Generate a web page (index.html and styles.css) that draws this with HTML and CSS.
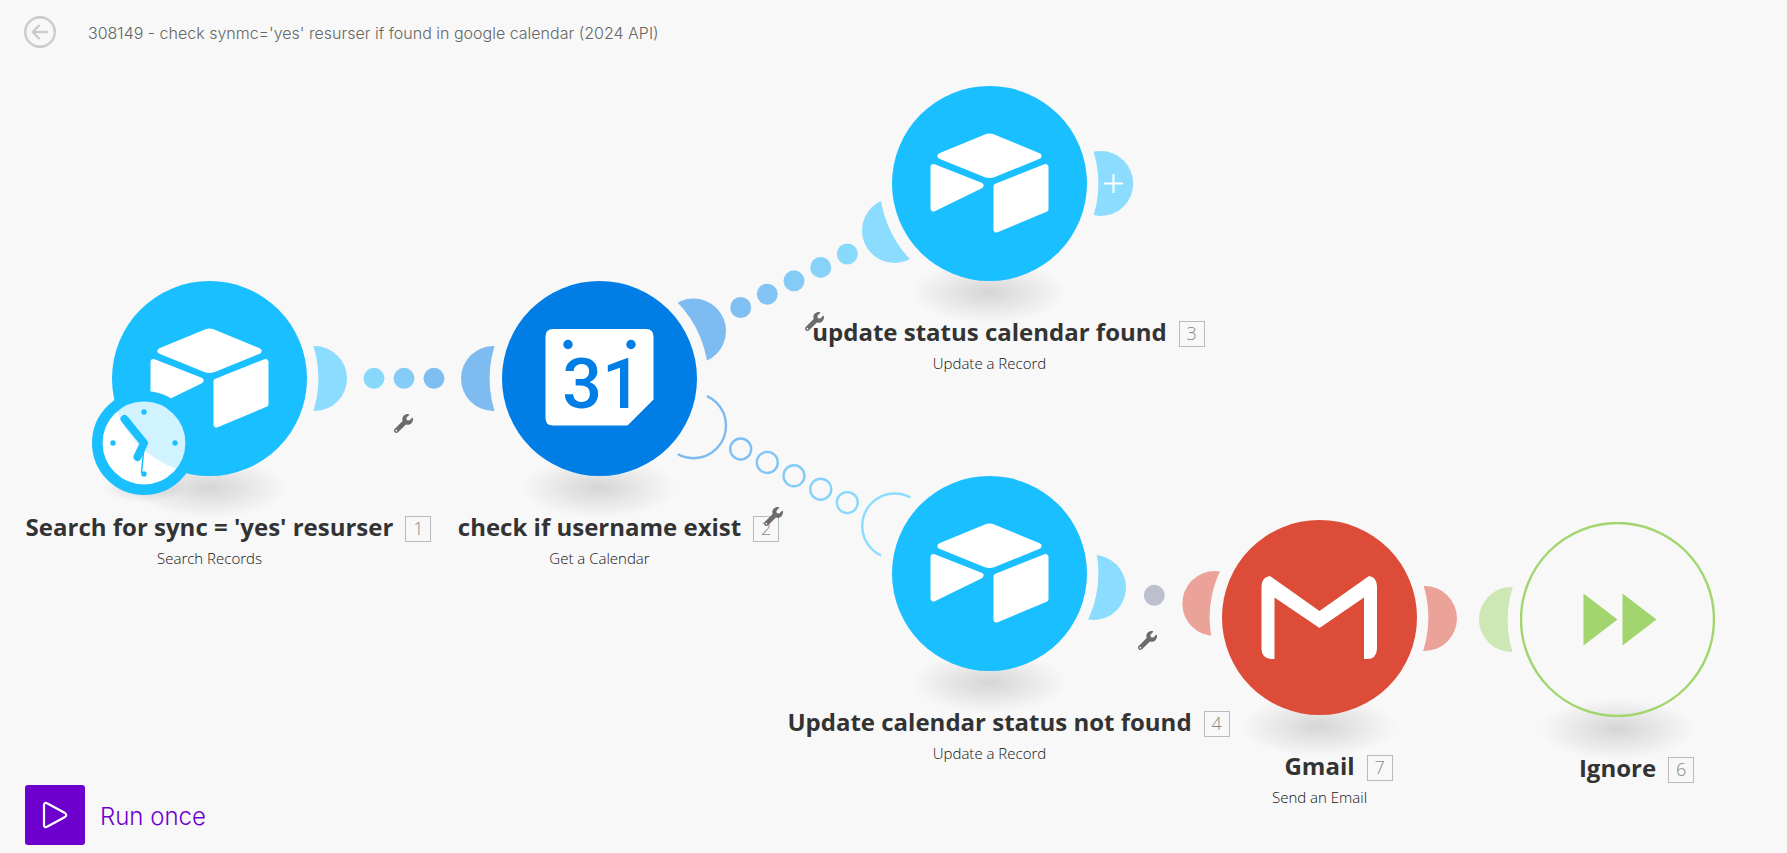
FILE: index.html
```html
<!DOCTYPE html>
<html lang="en">
<head>
<meta charset="utf-8">
<title>Scenario</title>
<link rel="stylesheet" href="styles.css">
</head>
<body>
<svg class="defs" aria-hidden="true">
  <defs>
    <radialGradient id="shade">
      <stop offset="0" stop-color="#000" stop-opacity=".14"/>
      <stop offset=".5" stop-color="#000" stop-opacity=".07"/>
      <stop offset="1" stop-color="#000" stop-opacity="0"/>
    </radialGradient>
    <symbol id="halo" viewBox="0 0 220 260">
      <circle cx="110" cy="110" r="109.4" fill="#f8f8f8"/>
      <ellipse cx="110" cy="219" rx="78" ry="31" fill="url(#shade)"/>
    </symbol>
    <symbol id="airtable" viewBox="0 0 195 195">
      <g fill="#fff" stroke="#fff" stroke-width="6" stroke-linejoin="round">
        <path d="M48.500 70 94 51.200Q97.500 50 101 51.200L146.500 70 101 88.500Q97.500 89.700 94 88.500Z"/>
        <path d="M41.500 81 88.500 99.500 41.500 122.500Z"/>
        <path d="M104.500 100.500 153.500 81V123L104.500 143.500Z"/>
      </g>
    </symbol>
    <symbol id="wrench" viewBox="0 0 512 512">
      <path fill="#6b6b6b" fill-rule="evenodd" d="M507.700 109.100c-2.200-9-13.500-12.100-20.100-5.500l-74.400 74.400-67.900-11.300L334 98.900l74.400-74.400c6.600-6.600 3.400-17.900-5.700-20.200-47.400-11.700-99.600.900-136.600 37.900-39.600 39.600-50.500 97.100-34.100 147.200L18.700 402.800c-25 25-25 65.500 0 90.500s65.500 25 90.500 0l213.200-213.200c50.100 16.700 107.500 5.700 147.400-34.200 37.100-37.100 49.700-89.300 37.900-136.800zM64 472c-13.200 0-24-10.800-24-24s10.700-24 24-24 24 10.700 24 24-10.700 24-24 24z"/>
    </symbol>
  </defs>
</svg>
<main class="scenario">
  <div class="canvas">
    <svg class="wires" aria-hidden="true">
      <g fill="#8bdcfe">
        <circle cx="314.500" cy="378.500" r="32.500"/>
        <circle cx="894.500" cy="230.500" r="32.500"/>
        <circle cx="1100.700" cy="183.500" r="32.500"/>
        <circle cx="1093.500" cy="587.500" r="32.500"/>
      </g>
      <g fill="#7ebbf0">
        <circle cx="493.500" cy="378.500" r="32.500"/>
        <circle cx="693.500" cy="331" r="32.500"/>
      </g>
      <g fill="#eba299">
        <circle cx="1214.800" cy="603.500" r="32.500"/>
        <circle cx="1424.500" cy="618.400" r="32.500"/>
      </g>
      <circle cx="1511.500" cy="619.400" r="32.500" fill="#cde7b5"/>
      <g fill="none" stroke-width="2.400">
        <circle cx="693.500" cy="425.700" r="32.500" stroke="#7ebbf0"/>
        <circle cx="894.700" cy="526" r="32.500" stroke="#8bdcfe"/>
      </g>
      <circle cx="374" cy="378.300" r="10.500" fill="#88d8fb"/>
      <circle cx="404" cy="378.300" r="10.500" fill="#84cbf6"/>
      <circle cx="434" cy="378.300" r="10.500" fill="#7fbef1"/>
      <circle cx="740.700" cy="307.500" r="10.500" fill="#80bff1"/>
      <circle cx="767.300" cy="294.200" r="10.500" fill="#82c5f4"/>
      <circle cx="794" cy="280.800" r="10.500" fill="#84ccf7"/>
      <circle cx="820.700" cy="267.400" r="10.500" fill="#86d2f9"/>
      <circle cx="847.300" cy="254" r="10.500" fill="#89d9fc"/>
      <g fill="none" stroke-width="2.400">
        <circle cx="740.700" cy="449" r="10.500" stroke="#80bff1"/>
        <circle cx="767.300" cy="462.400" r="10.500" stroke="#82c5f4"/>
        <circle cx="794" cy="475.800" r="10.500" stroke="#84ccf7"/>
        <circle cx="820.700" cy="489.200" r="10.500" stroke="#86d2f9"/>
        <circle cx="847.300" cy="502.600" r="10.500" stroke="#89d9fc"/>
      </g>
      <circle cx="1154.300" cy="595.300" r="10.500" fill="#bbc0cc"/>
      <use href="#halo" x="99" y="268.500" width="220" height="260"/>
      <use href="#halo" x="489" y="268.500" width="220" height="260"/>
      <use href="#halo" x="879" y="73.500" width="220" height="260"/>
      <use href="#halo" x="879" y="463.500" width="220" height="260"/>
      <use href="#halo" x="1209" y="507.500" width="220" height="260"/>
      <use href="#halo" x="1507" y="510" width="220" height="260"/>
      <ellipse cx="144" cy="487" rx="42" ry="16" fill="url(#shade)"/>
      <path d="M1104 183.500h19M1113.500 174v19" stroke="#fff" stroke-width="2"/>
    </svg>

    <article class="node n1">
      <svg class="disc" viewBox="0 0 195 195"><circle cx="97.500" cy="97.500" r="97.500" fill="#19bfff"/><use href="#airtable" width="195" height="195"/></svg>
      <svg class="clock" viewBox="0 0 104 104">
        <circle cx="52" cy="52" r="46.500" fill="#19bfff"/>
        <circle cx="52" cy="52" r="46.500" fill="#fff" fill-opacity=".8"/>
        <path d="M24 17A97.500 97.500 0 0 0 85 78L70 90A42 42 0 0 1 24 17Z" fill="#fff"/>
        <circle cx="52" cy="52" r="46.700" fill="none" stroke="#19bfff" stroke-width="10.600"/>
        <g fill="#19bfff"><circle cx="52" cy="21" r="2.700"/><circle cx="52" cy="83" r="2.700"/><circle cx="21" cy="52" r="2.700"/><circle cx="83" cy="52" r="2.700"/></g>
        <path d="M32.500 28 52 52 45.500 66" fill="none" stroke="#19bfff" stroke-width="8" stroke-linecap="round" stroke-linejoin="round"/>
        <path d="M52 56 49.500 82" stroke="#19bfff" stroke-width="1.500"/>
      </svg>
      <h2 class="name">Search for sync = 'yes' resurser<span class="badge">1</span></h2>
      <p class="action">Search Records</p>
    </article>

    <article class="node n2">
      <svg class="disc" viewBox="0 0 195 195"><circle cx="97.500" cy="97.500" r="97.500" fill="#007ee5"/>
        <path d="M51 48H144Q151.500 48 151.500 55.500V118.500L125.500 144.500H51Q43.500 144.500 43.500 137V55.500Q43.500 48 51 48Z" fill="#fff"/>
        <circle cx="66" cy="63.500" r="4.700" fill="#007ee5"/><circle cx="129" cy="63.500" r="4.700" fill="#007ee5"/>
        <text class="day" x="100" y="127">31</text>
      </svg>
      <h2 class="name">check if username exist<span class="badge">2</span></h2>
      <p class="action">Get a Calendar</p>
    </article>

    <article class="node n3">
      <svg class="disc" viewBox="0 0 195 195"><circle cx="97.500" cy="97.500" r="97.500" fill="#19bfff"/><use href="#airtable" width="195" height="195"/></svg>
      <h2 class="name">update status calendar found<span class="badge">3</span></h2>
      <p class="action">Update a Record</p>
    </article>

    <article class="node n4">
      <svg class="disc" viewBox="0 0 195 195"><circle cx="97.500" cy="97.500" r="97.500" fill="#19bfff"/><use href="#airtable" width="195" height="195"/></svg>
      <h2 class="name">Update calendar status not found<span class="badge">4</span></h2>
      <p class="action">Update a Record</p>
    </article>

    <article class="node n7">
      <svg class="disc" viewBox="0 0 195 195"><circle cx="97.500" cy="97.500" r="97.500" fill="#dd4b39"/>
        <path d="M52.500 139H49Q39.500 138 39.500 129V66Q40 57 48 56L97.500 91 147 56Q154.500 57 155 66V129Q154.500 139 145 139H142V77.500L97.500 108 52.500 77.500Z" fill="#fff"/>
      </svg>
      <h2 class="name">Gmail<span class="badge">7</span></h2>
      <p class="action">Send an Email</p>
    </article>

    <article class="node n6">
      <svg class="disc" viewBox="0 0 195 195"><circle cx="97.500" cy="97.500" r="96.500" fill="none" stroke="#a2d56e" stroke-width="2.400"/>
        <path d="M63.500 71.500 97.500 97.500 63.500 123.500ZM102.500 71.500 136.500 97.500 102.500 123.500Z" fill="#a2d56e"/>
      </svg>
      <h2 class="name">Ignore<span class="badge">6</span></h2>
    </article>

    <button class="tool t1" aria-label="Set up link"><svg viewBox="0 0 512 512"><use href="#wrench"/></svg></button>
    <button class="tool t2" aria-label="Set up link"><svg viewBox="0 0 512 512"><use href="#wrench"/></svg></button>
    <button class="tool t3" aria-label="Set up link"><svg viewBox="0 0 512 512"><use href="#wrench"/></svg></button>
    <button class="tool t4" aria-label="Set up link"><svg viewBox="0 0 512 512"><use href="#wrench"/></svg></button>
  </div>

  <header class="top">
    <a class="back" href="#" aria-label="Back"><svg viewBox="0 0 32 32" fill="none" stroke="#cbcbcb" stroke-width="2.400"><circle cx="16" cy="16" r="14.800"/><path d="M24 16H9M15.500 9 8.800 16 15.500 23" stroke-linejoin="round"/></svg></a>
    <h1 class="title">308149 - check synmc='yes' resurser if found in google calendar (2024 API)</h1>
  </header>
  <footer class="bottom">
    <button class="run"><span class="run-icon"><svg viewBox="0 0 26 28"><path d="M2 4.500V23.500Q2 27.500 5.500 25.500L23 16Q25.500 14 23 12L5.500 2.500Q2 .800 2 4.500Z" fill="none" stroke="#fff" stroke-width="2.200"/></svg></span><span class="run-text">Run once</span></button>
  </footer>
</main>
</body>
</html>
```
FILE: styles.css
```css
* { box-sizing: border-box; }
body {
  margin: 0;
  background: #f8f8f8;
  color: #333;
  font-family: "Open Sans", "Noto Sans", sans-serif;
}
button { margin: 0; padding: 0; border: 0; background: none; cursor: pointer; }
svg { display: block; }
.defs { position: absolute; width: 0; height: 0; }

.scenario {
  position: relative;
  display: flex;
  flex-direction: column;
  justify-content: space-between;
  min-height: 100vh;
  overflow: hidden;
}
.top, .bottom { position: relative; display: flex; align-items: center; }
.top { padding: 16px 24px; gap: 32px; }
.back svg { width: 32px; height: 32px; }
.title { margin: 0; padding-top: 2px; font: 300 16px/20px Inter, sans-serif; color: #666; }
.bottom { padding: 8px 25px; }
.run { display: flex; align-items: center; gap: 15px; }
.run-icon {
  display: flex;
  align-items: center;
  justify-content: center;
  width: 60px;
  height: 60px;
  border-radius: 3px;
  background: #6d00cc;
}
.run-icon svg { width: 26px; height: 28px; }
.run-text { padding-top: 4px; font: 300 24px/32px Inter, sans-serif; color: #6d00cc; }

.canvas { position: absolute; inset: 0; }
.wires { position: absolute; inset: 0; width: 100%; height: 100%; }

.node {
  position: absolute;
  display: flex;
  flex-direction: column;
  align-items: center;
  width: 195px;
}
.n1 { left: 112px; top: 281px; }
.n2 { left: 502px; top: 281px; }
.n3 { left: 892px; top: 86px; }
.n4 { left: 892px; top: 476px; }
.n7 { left: 1222px; top: 520px; }
.n6 { left: 1520px; top: 522px; }
.disc { width: 195px; height: 195px; }
.clock { position: absolute; left: -20px; top: 110px; width: 104px; height: 104px; }
.day {
  font: 500 70px Roboto, sans-serif;
  fill: #007ee5;
  text-anchor: middle;
}
.name {
  position: relative;
  margin: 35px 0 0;
  font-size: 24px;
  font-weight: 700;
  line-height: 32px;
  white-space: nowrap;
}
.badge {
  position: absolute;
  left: 100%;
  top: 5px;
  width: 26px;
  height: 26px;
  margin-left: 12px;
  border: 1px solid #bbb;
  font-size: 18px;
  font-weight: 300;
  line-height: 22px;
  text-align: center;
  color: #888;
}
.action {
  margin: 5px 0 0;
  color: #111;
  font-size: 15px;
  font-weight: 300;
  line-height: 20px;
  white-space: nowrap;
}

.tool { position: absolute; width: 19px; height: 19px; }
.tool svg { width: 19px; height: 19px; }
.t1 { left: 394px; top: 414px; }
.t2 { left: 805px; top: 312px; }
.t3 { left: 764px; top: 507px; }
.t4 { left: 1138px; top: 631px; }
```
